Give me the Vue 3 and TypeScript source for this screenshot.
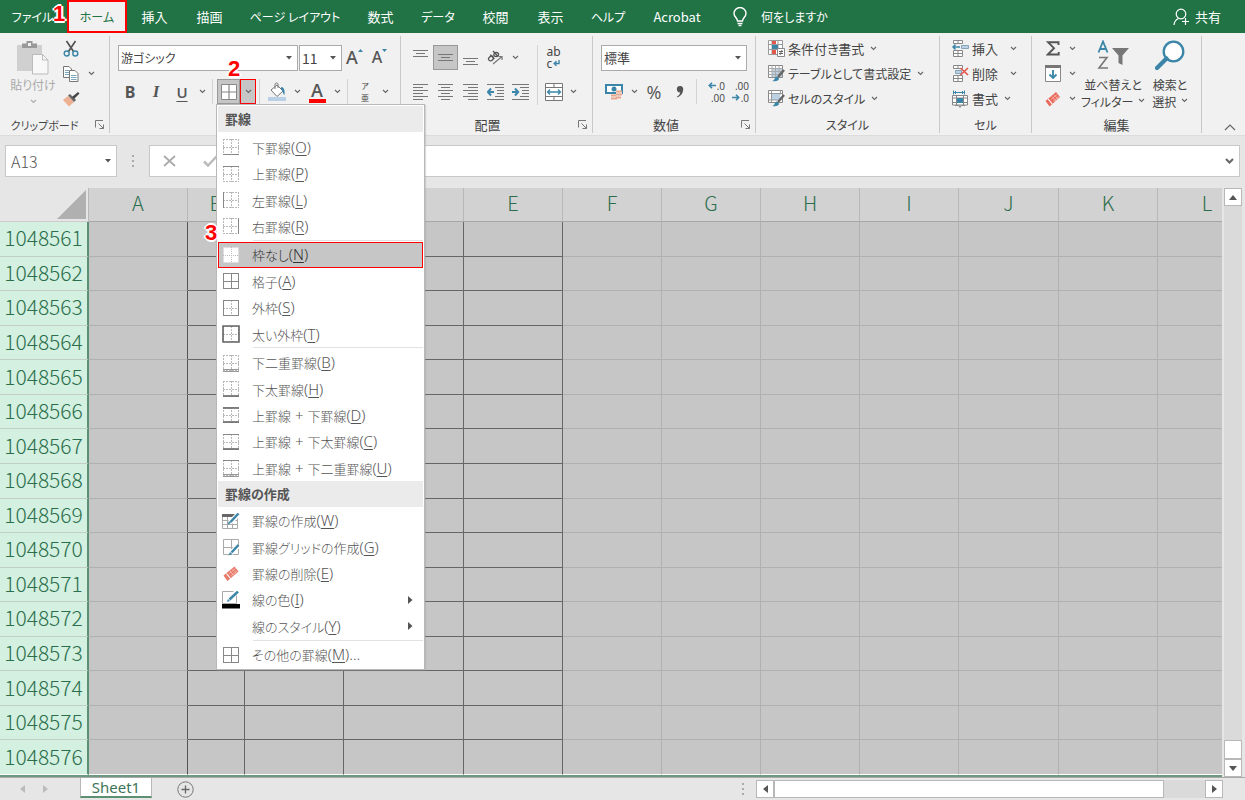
<script setup lang="ts">
import { h, ref } from 'vue'

const Chevron = () =>
  h('svg', { class: 'chev', viewBox: '0 0 7 5', width: 7, height: 5, 'aria-hidden': 'true' }, [
    h('path', { d: 'M1 1l2.5 2.5L6 1', fill: 'none', stroke: 'currentColor', 'stroke-width': 1.1 }),
  ])

const Caret = () =>
  h('svg', { class: 'caret', viewBox: '0 0 6 4', width: 6, height: 4, 'aria-hidden': 'true' }, [
    h('path', { d: 'M0 0h6L3 3.5z', fill: '#555' }),
  ])

const Launcher = () =>
  h('svg', { viewBox: '0 0 10 10', width: 10, height: 10, 'aria-hidden': 'true' }, [
    h('path', { d: 'M.5 7.5V.5H8M3.5 3.5L8.5 8.5M8.500 4.500v4H4.500', fill: 'none', stroke: '#777', 'stroke-width': 1 }),
  ])

const LinesIcon = (props: { rows: number[][] }) =>
  h(
    'svg',
    { viewBox: '0 0 16 18', width: 16, height: 18, 'aria-hidden': 'true' },
    props.rows.map(([x, y, w]) => h('rect', { x, y, width: w, height: 1, fill: '#777' })),
  )
LinesIcon.props = ['rows']

const Arrow = (props: { to: string }) =>
  h('svg', { viewBox: '0 0 8 7', width: 8, height: 7, 'aria-hidden': 'true' }, [
    h('path', {
      d: props.to === 'left' ? 'M8 3.5H1.500M4 .8L1.300 3.500 4 6.200' : 'M0 3.5h6.500M4 .8L6.700 3.500 4 6.200',
      fill: 'none',
      stroke: '#3b86a8',
      'stroke-width': 1.6,
    }),
  ])
Arrow.props = ['to']

interface Tab {
  label: string
  size: string
}
const tabs: Tab[] = [
  { label: '挿入', size: 'kanji' },
  { label: '描画', size: 'kanji' },
  { label: 'ページ レイアウト', size: 'long' },
  { label: '数式', size: 'kanji' },
  { label: 'データ', size: 'kana' },
  { label: '校閲', size: 'kanji' },
  { label: '表示', size: 'kanji' },
  { label: 'ヘルプ', size: 'kana' },
  { label: 'Acrobat', size: 'latin' },
]

interface Entry {
  parts: string[]
  key: string
  tail?: string
  icon: string
  edges?: string[]
  arrow?: boolean
  active?: boolean
}

const groups: { title?: string; entries: Entry[] }[] = [
  {
    title: '罫線',
    entries: [
      { parts: ['下罫線'], key: 'O', icon: 'grid', edges: ['b'] },
      { parts: ['上罫線'], key: 'P', icon: 'grid', edges: ['t'] },
      { parts: ['左罫線'], key: 'L', icon: 'grid', edges: ['l'] },
      { parts: ['右罫線'], key: 'R', icon: 'grid', edges: ['r'] },
    ],
  },
  {
    entries: [
      { parts: ['枠なし'], key: 'N', icon: 'none', active: true },
      { parts: ['格子'], key: 'A', icon: 'grid', edges: ['t', 'b', 'l', 'r', 'h', 'v'] },
      { parts: ['外枠'], key: 'S', icon: 'grid', edges: ['t', 'b', 'l', 'r'] },
      { parts: ['太い外枠'], key: 'T', icon: 'grid', edges: ['box'] },
    ],
  },
  {
    entries: [
      { parts: ['下二重罫線'], key: 'B', icon: 'grid', edges: ['bb'] },
      { parts: ['下太罫線'], key: 'H', icon: 'grid', edges: ['B'] },
      { parts: ['上罫線', '下罫線'], key: 'D', icon: 'grid', edges: ['T', 'B'] },
      { parts: ['上罫線', '下太罫線'], key: 'C', icon: 'grid', edges: ['t', 'B'] },
      { parts: ['上罫線', '下二重罫線'], key: 'U', icon: 'grid', edges: ['t', 'bb'] },
    ],
  },
  {
    title: '罫線の作成',
    entries: [
      { parts: ['罫線の作成'], key: 'W', icon: 'draw' },
      { parts: ['罫線グリッドの作成'], key: 'G', icon: 'drawgrid' },
      { parts: ['罫線の削除'], key: 'E', icon: 'erase' },
      { parts: ['線の色'], key: 'I', icon: 'color', arrow: true },
      { parts: ['線のスタイル'], key: 'Y', icon: '', arrow: true },
    ],
  },
  {
    entries: [{ parts: ['その他の罫線'], key: 'M', tail: '...', icon: 'grid', edges: ['t', 'b', 'l', 'r', 'h', 'v'] }],
  },
]

const edgePaths: Record<string, { d: string; w: number; c: string }> = {
  t: { d: 'M1 1.5h16', w: 1, c: '#888' },
  b: { d: 'M1 16.5h16', w: 1, c: '#888' },
  l: { d: 'M1.5 1v16', w: 1, c: '#888' },
  r: { d: 'M16.5 1v16', w: 1, c: '#888' },
  h: { d: 'M1 9.500h16', w: 1, c: '#888' },
  v: { d: 'M9.500 1v16', w: 1, c: '#888' },
  T: { d: 'M1 2h16', w: 1.6, c: '#666' },
  B: { d: 'M1 16h16', w: 1.6, c: '#666' },
  box: { d: 'M1 1h16v16H1z', w: 1.6, c: '#666' },
  bb: { d: 'M1 15.500h16M1 17.500h16', w: 1, c: '#999' },
}

const columns = ['A', 'B', 'C', 'D', 'E', 'F', 'G', 'H', 'I', 'J', 'K', 'L']
const rows = Array.from({ length: 16 }, (_, i) => 1048561 + i)
const bordered = new Set(['B', 'C', 'D', 'E'])

const font = ref('游ゴシック')
const size = ref('11')
const format = ref('標準')
const cell = ref('A13')
const formula = ref('')
</script>

<template>
  <div class="app">
    <header class="tabs">
      <button class="tab file">ファイル</button>
      <button class="tab home">ホーム<span class="badge one">1</span></button>
      <button v-for="t in tabs" :key="t.label" class="tab" :class="t.size">{{ t.label }}</button>
      <button class="tell">
        <svg viewBox="0 0 14 20" width="14" height="20" aria-hidden="true">
          <path d="M4.5 14c0-3-3.5-4-3.500-7.500a6 6 0 0 1 12 0c0 3.500-3.500 4.500-3.500 7.500z" fill="none" stroke="#fff" stroke-width="1.400" />
          <path d="M4.500 16.500h5M5.500 18.500h3" stroke="#fff" stroke-width="1.400" />
        </svg>
        <span>何をしますか</span>
      </button>
      <button class="share">
        <svg viewBox="0 0 17 18" width="17" height="18" aria-hidden="true">
          <circle cx="8" cy="6" r="4.800" fill="none" stroke="#fff" stroke-width="1.200" />
          <path d="M1 17c.3-3.500 2-5.500 4.500-6.500M12.500 10v7M9 13.500h7" fill="none" stroke="#fff" stroke-width="1.200" />
        </svg>
        <span>共有</span>
      </button>
    </header>

    <section class="ribbon">
      <div class="group clipboard">
        <div class="body triple">
          <button class="paste" disabled>
            <svg viewBox="0 0 32 34" width="32" height="34" aria-hidden="true">
              <path d="M0 4h25v26H0z" fill="#d0d0d0" />
              <path d="M5 7V2.500h4.500V0h6v2.500H20V7z" fill="#999" />
              <rect x="11" y="2" width="3" height="3" fill="#f1f1f1" />
              <path d="M15.500 13.500h10l5.500 5.500v14H15.500z" fill="#f8f8f8" stroke="#bbb" />
              <path d="M25.500 13.500V19H31" fill="none" stroke="#bbb" />
            </svg>
            <span>貼り付け</span>
            <Chevron />
          </button>
          <div class="stack">
            <div class="line"><button class="tool" aria-label="切り取り">
              <svg viewBox="0 0 16 18" width="16" height="18" aria-hidden="true">
                <path d="M3.500 1l7 10.500M12.500 1l-7 10.500" stroke="#555" stroke-width="1.700" />
                <circle cx="3.700" cy="13.500" r="2.500" fill="none" stroke="#3b86a8" stroke-width="1.400" />
                <circle cx="12.300" cy="13.500" r="2.500" fill="none" stroke="#3b86a8" stroke-width="1.400" />
              </svg></button></div>
            <div class="line"><button class="tool" aria-label="コピー">
              <svg viewBox="0 0 16 16" width="16" height="16" aria-hidden="true">
                <path d="M.5.5H6L8.500 3v8.500h-8z" fill="#fff" stroke="#777" />
                <path d="M2 4.500h4M2 6.500h4M2 8.500h4" stroke="#7ba7bd" />
                <path d="M6.500 4.500H12L15 7.500v8H6.500z" fill="#fff" stroke="#777" />
                <path d="M8 9.500h5.500M8 11.500h5.500M8 13.500h5.500" stroke="#7ba7bd" />
              </svg></button><button class="drop" aria-label="コピーのオプション"><Chevron /></button></div>
            <div class="line"><button class="tool" aria-label="書式のコピー">
              <svg viewBox="0 0 17 16" width="17" height="16" aria-hidden="true">
                <path d="M0 9l5-4 6 6-5 4.500z" fill="#edb093" />
                <path d="M5 4.500l2-1.500 6 6-2 2z" fill="#666" />
                <path d="M9 6l6-5 1.500 1.500L11 8z" fill="#444" />
              </svg></button></div>
          </div>
        </div>
        <div class="caption"><span>クリップボード</span><button class="launch" aria-label="クリップボードの詳細"><Launcher /></button></div>
      </div>

      <div class="group fonts">
        <div class="body">
          <div class="line">
            <div class="combo family"><select v-model="font" aria-label="フォント"><option>游ゴシック</option></select><Caret /></div>
            <div class="combo points"><select v-model="size" aria-label="フォント サイズ"><option>11</option></select><Caret /></div>
            <button class="tool grow" aria-label="フォント サイズの拡大">A<svg viewBox="0 0 5 3" width="5" height="3"><path d="M0 3h5L2.500 0z" fill="#3b86a8" /></svg></button>
            <button class="tool grow shrink" aria-label="フォント サイズの縮小">A<svg viewBox="0 0 5 3" width="5" height="3"><path d="M0 0h5L2.500 3z" fill="#3b86a8" /></svg></button>
          </div>
          <div class="line marks">
            <button class="tool bold">B</button>
            <button class="tool italic">I</button>
            <button class="tool under">U</button>
            <button class="drop" aria-label="下線の種類"><Chevron /></button>
            <i class="rule"></i>
            <div class="split">
              <button class="split-main" aria-label="罫線">
                <svg viewBox="0 0 16 16" width="16" height="16" aria-hidden="true">
                  <path d="M.5.5h15v15H.5z" fill="#fff" stroke="#888" /><path d="M0 8h16M8 0v16" stroke="#888" stroke-width="1.200" />
                </svg>
              </button>
              <button class="split-drop" aria-label="罫線メニュー"><Chevron /></button>
              <span class="badge two">2</span>
              <div class="menu" role="menu">
                <template v-for="(g, gi) in groups" :key="gi">
                  <div v-if="g.title" class="menu-title">{{ g.title }}</div>
                  <div v-else class="menu-rule"></div>
                  <button v-for="e in g.entries" :key="e.key" class="entry" :class="{ active: e.active }" role="menuitem">
                    <span v-if="e.active" class="badge three">3</span>
                    <svg class="entry-icon" viewBox="0 0 18 18" width="18" height="18" aria-hidden="true">
                      <template v-if="e.icon === 'grid'">
                        <path d="M1 1.500h16M1 16.500h16M1.500 1v16M16.500 1v16M1 9.500h16M9.500 1v16" fill="none" stroke="#b8b8b8" stroke-dasharray="2 1" />
                        <path v-for="k in e.edges" :key="k" :d="edgePaths[k].d" fill="none" :stroke="edgePaths[k].c" :stroke-width="edgePaths[k].w" />
                      </template>
                      <template v-else-if="e.icon === 'none'">
                        <path d="M1.500 1.500h15v15h-15z" fill="#fff" stroke="#ddd" stroke-dasharray="1 1" />
                        <path d="M1 9.500h16M9.500 1v16" stroke="#bbb" stroke-dasharray="1 1" />
                      </template>
                      <template v-else-if="e.icon === 'draw'">
                        <path d="M.5 3.500h15v13H.5zM.5 8.500h15M.5 12.500h15M5.500 4v12M10.500 4v12" fill="#fff" stroke="#aaa" />
                        <path d="M0 2h16v3H0z" fill="#666" />
                        <path d="M8 10.500l8-8" stroke="#fff" stroke-width="5" />
                        <path d="M8.500 10l8-8.500" stroke="#3b86a8" stroke-width="2.500" />
                        <path d="M5.500 12.500l1.500-3.500 2 2z" fill="#3b86a8" />
                      </template>
                      <template v-else-if="e.icon === 'drawgrid'">
                        <path d="M1.500 1.500h15v15h-15zM1.500 9.500h15M9.500 1.500v15" fill="#fff" stroke="#aaa" />
                        <path d="M9 15l7-7" stroke="#fff" stroke-width="5" />
                        <path d="M9.500 14.500l7-7.500" stroke="#3b86a8" stroke-width="2.500" />
                        <path d="M6.500 17.500l1.500-3.500 2 2z" fill="#3b86a8" />
                      </template>
                      <template v-else-if="e.icon === 'erase'">
                        <path d="M1.500 10.500L12.500 1.500 16.500 6.500 5.500 16z" fill="#e9796b" />
                        <path d="M4.500 8.500l4 5" stroke="#fff" stroke-width="1.200" />
                        <path d="M8 6l4 4.500M10.500 4l4 4.500M7 9l6.500-5.500M9 11l6-5" stroke="#f6c4bd" stroke-width=".7" />
                      </template>
                      <template v-else-if="e.icon === 'color'">
                        <path d="M.5.5h14v12H.5z" fill="#fff" stroke="#aaa" />
                        <path d="M7 8.500l8-8" stroke="#fff" stroke-width="5" />
                        <path d="M7.500 8.500l8.500-8" stroke="#3b86a8" stroke-width="2.500" />
                        <path d="M5 11l1-3 2 2z" fill="#3b86a8" />
                        <path d="M0 13h18v4.500H0z" fill="#000" />
                      </template>
                    </svg>
                    <span class="entry-text"><template v-for="(p, pi) in e.parts" :key="p"><span v-if="pi" class="plus"> + </span>{{ p }}</template><span class="hint">(<u>{{ e.key }}</u>){{ e.tail }}</span></span>
                    <svg v-if="e.arrow" class="entry-arrow" viewBox="0 0 5 8" width="5" height="8" aria-hidden="true"><path d="M0 0l4.500 4L0 8z" fill="#555" /></svg>
                  </button>
                </template>
              </div>
            </div>
            <i class="rule"></i>
            <button class="tool" aria-label="塗りつぶしの色">
              <svg viewBox="0 0 20 19" width="20" height="19" aria-hidden="true">
                <path d="M4 8l6-5 6 6-6 5.500z" fill="#fff" stroke="#777" />
                <path d="M8 7V2.500a1.500 1.500 0 0 1 3 0V6" fill="none" stroke="#777" />
                <path d="M14 5c3 0 4 3 3.500 8-2-1-1-4-3.500-6z" fill="#3b86a8" />
                <path d="M1 15h18v4H1z" fill="#b9d0e6" />
              </svg>
            </button>
            <button class="drop" aria-label="塗りつぶしの色を選択"><Chevron /></button>
            <button class="tool ink" aria-label="フォントの色">A</button>
            <button class="drop" aria-label="フォントの色を選択"><Chevron /></button>
            <i class="rule"></i>
            <button class="tool ruby"><span>ア</span><span>亜</span></button>
            <button class="drop" aria-label="ふりがなのオプション"><Chevron /></button>
          </div>
        </div>
        <div class="caption"></div>
      </div>

      <div class="group align">
        <div class="body cols">
          <div class="pair">
            <div class="line">
              <button class="tool" aria-label="上揃え"><LinesIcon :rows="[[0, 1, 15], [3, 4, 9], [0, 7, 15]]" /></button>
              <button class="tool pressed" aria-label="上下中央揃え"><LinesIcon :rows="[[0, 5, 15], [3, 8, 9], [0, 11, 15]]" /></button>
              <button class="tool" aria-label="下揃え"><LinesIcon :rows="[[0, 9, 15], [3, 12, 9], [0, 15, 15]]" /></button>
              <button class="tool" aria-label="方向">
                <svg viewBox="0 0 17 16" width="17" height="16" aria-hidden="true">
                  <ellipse cx="4" cy="8.500" rx="2.600" ry="2.100" fill="none" stroke="#555" stroke-width="1.300" transform="rotate(-40 4 8.500)" />
                  <path d="M3.300 4.600L7.300 9M6 1l5 5.500" stroke="#555" stroke-width="1.300" />
                  <ellipse cx="9.200" cy="4.600" rx="2.400" ry="2.100" fill="none" stroke="#555" stroke-width="1.300" />
                  <path d="M6 14l9-7.500M11.500 6.500H15V10" fill="none" stroke="#777" stroke-width="1.200" />
                </svg>
              </button>
              <button class="drop" aria-label="方向の種類"><Chevron /></button>
            </div>
            <div class="line">
              <button class="tool" aria-label="左揃え"><LinesIcon :rows="[[0, 1, 15], [0, 4, 10], [0, 7, 15], [0, 10, 10], [0, 13, 15], [0, 16, 10]]" /></button>
              <button class="tool" aria-label="中央揃え"><LinesIcon :rows="[[0, 1, 15], [3, 4, 9], [0, 7, 15], [3, 10, 9], [0, 13, 15], [3, 16, 9]]" /></button>
              <button class="tool" aria-label="右揃え"><LinesIcon :rows="[[0, 1, 15], [5, 4, 10], [0, 7, 15], [5, 10, 10], [0, 13, 15], [5, 16, 10]]" /></button>
              <button v-for="d in ['out', 'in']" :key="d" class="tool" :aria-label="d === 'out' ? 'インデントを減らす' : 'インデントを増やす'">
                <svg viewBox="0 0 17 18" width="17" height="18" aria-hidden="true">
                  <path d="M0 1.500h17M8 4.500h9M10 7.500h7M10 10.500h7M8 13.500h9M0 16.500h17" stroke="#777" />
                  <path :d="d === 'out' ? 'M7 9H1M4 5.500L.8 9 4 12.500' : 'M0 9h6M3 5.500L6.200 9 3 12.500'" fill="none" stroke="#3b86a8" stroke-width="2" />
                </svg>
              </button>
            </div>
          </div>
          <i class="rule tall"></i>
          <div class="pair">
            <div class="line"><button class="tool" aria-label="折り返して全体を表示する">
              <span class="wrap"><span>ab</span><span class="wrap-low">c<svg viewBox="0 0 7 7" width="7" height="7" aria-hidden="true"><path d="M6 0v3.500H1.500M3.500 1.200L1.200 3.500l2.300 2.300" fill="none" stroke="#3b86a8" stroke-width="1.400" /></svg></span></span>
            </button></div>
            <div class="line"><button class="tool" aria-label="セルを結合して中央揃え">
              <svg viewBox="0 0 18 18" width="18" height="18" aria-hidden="true">
                <path d="M.5.5h17v17H.5zM.5 4.500h17M.5 13.500h17M9 .5v4M9 13.500v4" fill="#fff" stroke="#777" />
                <path d="M3 9h12M5 6.500L2.500 9 5 11.500M13 6.500L15.500 9 13 11.500" fill="none" stroke="#3b86a8" stroke-width="1.300" />
              </svg></button><button class="drop" aria-label="結合のオプション"><Chevron /></button></div>
          </div>
        </div>
        <div class="caption"><span>配置</span><button class="launch" aria-label="配置の詳細"><Launcher /></button></div>
      </div>

      <div class="group number">
        <div class="body">
          <div class="line"><div class="combo format"><select v-model="format" aria-label="表示形式"><option>標準</option></select><Caret /></div></div>
          <div class="line">
            <button class="tool" aria-label="通貨表示形式">
              <svg viewBox="0 0 18 18" width="18" height="18" aria-hidden="true">
                <path d="M1 2h16v8H1z" fill="#fff" stroke="#3b86a8" stroke-width="2" />
                <circle cx="9" cy="6" r="2.500" fill="#3b86a8" />
                <path d="M11 8h6v8h-6z" fill="#f1f1f1" />
                <path d="M11 8.500h6M11 11.500h6M11 14.500h5M6 12.500h5M6 15.500h6" stroke="#e9a58c" stroke-width="2" />
              </svg>
            </button>
            <button class="drop" aria-label="通貨の種類"><Chevron /></button>
            <button class="tool percent">%</button>
            <button class="tool" aria-label="桁区切りスタイル">
              <svg viewBox="0 0 8 12" width="8" height="12" aria-hidden="true"><path d="M4 0a3 3 0 0 1 3.200 3.500C7.200 7 5 10 1.500 11.500L1 10.500C3 9.500 4 8 4.200 6.500A3 3 0 1 1 4 0z" fill="#555" /></svg>
            </button>
            <i class="rule"></i>
            <button class="tool digits"><span><Arrow to="left" />.0</span><span>.00</span></button>
            <button class="tool digits"><span>.00</span><span><Arrow to="right" />.0</span></button>
          </div>
        </div>
        <div class="caption"><span>数値</span><button class="launch" aria-label="数値の詳細"><Launcher /></button></div>
      </div>

      <div class="group styles">
        <div class="body triple list">
          <button class="wide">
            <svg viewBox="0 0 17 17" width="17" height="17" aria-hidden="true">
              <path d="M.5.5h14v14H.5zM.5 4.500h14M.5 9.500h14M4 .5v14M10 .5v14" fill="#fff" stroke="#999" />
              <path d="M4 1h4v3H4zM4 10h4v4H4z" fill="#e4574c" /><path d="M4 5h6v4H4z" fill="#3b86a8" />
              <path d="M9.500 8.500h7v8h-7z" fill="#fff" stroke="#888" /><path d="M11 11.500h4M11 13.500h4M14 10l-2 5" stroke="#666" />
            </svg>
            <span>条件付き書式</span><Chevron />
          </button>
          <button class="wide kana-text">
            <svg viewBox="0 0 17 17" width="17" height="17" aria-hidden="true">
              <path d="M.5.5h14v12H.5z" fill="#fff" stroke="#888" /><path d="M4 4h10v8H4z" fill="#bcd2e4" />
              <path d="M.5 3.500h14M.5 6.500h14M.5 9.500h14M4 .5v12M7.500 .5v12M11 .5v12" stroke="#aaa" />
              <path d="M10 12l6-7" stroke="#666" stroke-width="2.500" /><path d="M4 16c3 0 2-4 5-4.500l2 2c0 2.500-3 3-7 2.500z" fill="#3b86a8" />
            </svg>
            <span>テーブルとして書式設定</span><Chevron />
          </button>
          <button class="wide kana-text">
            <svg viewBox="0 0 17 17" width="17" height="17" aria-hidden="true">
              <path d="M.5.5h14v12H.5z" fill="#fff" stroke="#888" /><path d="M4 4h8v6H4z" fill="#bcd2e4" />
              <path d="M.5 3.500h14M3.500 .5v12M12.500 .5v4M.5 10h9" stroke="#999" />
              <path d="M10 12l6-7" stroke="#666" stroke-width="2.500" /><path d="M4 16c3 0 2-4 5-4.500l2 2c0 2.500-3 3-7 2.500z" fill="#3b86a8" />
            </svg>
            <span>セルのスタイル</span><Chevron />
          </button>
        </div>
        <div class="caption kana-text"><span>スタイル</span></div>
      </div>

      <div class="group cells">
        <div class="body triple list">
          <button class="wide spaced">
            <svg viewBox="0 0 17 17" width="17" height="17" aria-hidden="true">
              <path d="M1.500.5h9v3h-9zM6 .5v3M1.500 10.500h9v6h-9zM1.500 13.500h9M6 10.500v6" fill="#fff" stroke="#888" />
              <path d="M9.500 5.500h7v3h-7z" fill="#bcd2e4" stroke="#88a5b8" /><path d="M8 7H1M3.500 4.500L1 7l2.500 2.500" fill="none" stroke="#3b86a8" stroke-width="1.500" />
            </svg>
            <span>挿入</span><Chevron />
          </button>
          <button class="wide spaced">
            <svg viewBox="0 0 17 17" width="17" height="17" aria-hidden="true">
              <path d="M1.500.5h9v3h-9zM6 .5v3M1.500 10.500h9v6h-9zM1.500 13.500h9M6 10.500v6" fill="#fff" stroke="#888" />
              <path d="M3.500 5.500h6v3h-6z" fill="#bcd2e4" stroke="#88a5b8" /><path d="M8.500 3l7.500 7M16 3l-7.500 7" stroke="#e4574c" stroke-width="1.700" />
            </svg>
            <span>削除</span><Chevron />
          </button>
          <button class="wide">
            <svg viewBox="0 0 17 18" width="17" height="18" aria-hidden="true">
              <path d="M1.500.5v4M12.500.5v4M2 2.500h10M4 1L2.500 2.500 4 4M10 1l1.500 1.500L10 4" fill="none" stroke="#3b86a8" />
              <path d="M.5 5.500h15v9.500H.5zM.5 8h15M.5 12.500h15M4.500 5.500v10M11.500 5.500v10" fill="#fff" stroke="#888" />
              <path d="M5 8h6v5H5z" fill="#3b86a8" /><path d="M3 15.500h4l1 2 1-2h4" fill="none" stroke="#888" />
            </svg>
            <span>書式</span><Chevron />
          </button>
        </div>
        <div class="caption kana-text"><span>セル</span></div>
      </div>

      <div class="group edit">
        <div class="body triple">
          <div class="stack">
            <div class="line"><button class="tool" aria-label="合計">
              <svg viewBox="0 0 14 15" width="14" height="15" aria-hidden="true"><path d="M12.500 4V1.200H2L8 7.200 1.800 13.500h10.900V11" fill="none" stroke="#555" stroke-width="1.900" /></svg>
            </button><button class="drop" aria-label="合計の種類"><Chevron /></button></div>
            <div class="line"><button class="tool" aria-label="フィル">
              <svg viewBox="0 0 16 17" width="16" height="17" aria-hidden="true"><path d="M.5.5h15v16H.5z" fill="#fff" stroke="#888" /><path d="M0 0h16v3H0z" fill="#777" /><path d="M8 5v8M4.500 9.500L8 13l3.500-3.500" fill="none" stroke="#3b86a8" stroke-width="1.900" /></svg>
            </button><button class="drop" aria-label="フィルの種類"><Chevron /></button></div>
            <div class="line"><button class="tool" aria-label="クリア">
              <svg viewBox="0 0 16 16" width="16" height="16" aria-hidden="true"><path d="M.5 10L11 1l4 5L4.500 15.500z" fill="#e9695c" /><path d="M3.200 8l4 5" stroke="#fff" stroke-width="1.200" /><path d="M7 5.500l4 4.500M9 3.500l4 4.500M6 8.500L12.500 3M8 10.500l6-5" stroke="#f6c4bd" stroke-width=".7" /></svg>
            </button><button class="drop" aria-label="クリアの種類"><Chevron /></button></div>
          </div>
          <button class="big sort">
            <svg viewBox="0 0 32 30" width="32" height="30" aria-hidden="true">
              <path d="M1.500 12.500L6 1.500l4.500 11M3 9h6" fill="none" stroke="#3b86a8" stroke-width="1.800" />
              <path d="M2 17.500h8L2 28h9" fill="none" stroke="#777" stroke-width="1.600" />
              <path d="M15 8h17l-6.500 7.500V25l-4-2v-7.500z" fill="#777" />
            </svg>
            <span>並べ替えと</span><span>フィルター <Chevron /></span>
          </button>
          <button class="big find">
            <svg viewBox="0 0 30 30" width="30" height="30" aria-hidden="true">
              <circle cx="18.500" cy="11.500" r="9.800" fill="#fff" stroke="#3b86a8" stroke-width="2.300" />
              <path d="M2 28L11.500 18.500" stroke="#3b86a8" stroke-width="4.200" stroke-linecap="round" />
            </svg>
            <span>検索と</span><span>選択 <Chevron /></span>
          </button>
        </div>
        <div class="caption"><span>編集</span></div>
      </div>
      <button class="collapse" aria-label="リボンを折りたたむ">
        <svg viewBox="0 0 12 7" width="12" height="7" aria-hidden="true"><path d="M1 6l5-5 5 5" fill="none" stroke="#666" stroke-width="1.200" /></svg>
      </button>
    </section>

    <section class="formula">
      <div class="name"><input v-model="cell" aria-label="名前ボックス" /><Caret /></div>
      <i class="dots"></i>
      <div class="entrybar">
        <button aria-label="キャンセル"><svg viewBox="0 0 13 12" width="13" height="12" aria-hidden="true"><path d="M1 1l11 10M12 1L1 11" stroke="#aaa" stroke-width="1.700" /></svg></button>
        <button aria-label="入力"><svg viewBox="0 0 15 12" width="15" height="12" aria-hidden="true"><path d="M1 6.500l4 4L14 1" fill="none" stroke="#bbb" stroke-width="2.500" /></svg></button>
        <input v-model="formula" aria-label="数式バー" />
        <button class="expand" aria-label="数式バーの展開"><svg viewBox="0 0 9 6" width="9" height="6" aria-hidden="true"><path d="M1 1l3.500 3.500L8 1" fill="none" stroke="#666" stroke-width="2" /></svg></button>
      </div>
    </section>

    <main class="sheet">
      <div class="view">
        <table>
          <colgroup>
            <col class="c-head" />
            <col v-for="c in columns" :key="c" :class="'c-' + c" />
          </colgroup>
          <thead>
            <tr>
              <th class="corner"><svg viewBox="0 0 30 30" width="29" height="29" aria-hidden="true"><path d="M30 0v30H0z" fill="#b0b0b0" /></svg></th>
              <th v-for="c in columns" :key="c" scope="col">{{ c }}</th>
            </tr>
          </thead>
          <tbody>
            <tr v-for="r in rows" :key="r">
              <th scope="row">{{ r }}</th>
              <td v-for="c in columns" :key="c" :class="{ dark: bordered.has(c), edge: c === 'A' }"></td>
            </tr>
          </tbody>
        </table>
      </div>
      <div class="vscroll">
        <button class="cap" aria-label="上へ"><svg viewBox="0 0 8 5" width="8" height="5"><path d="M0 5h8L4 0z" fill="#555" /></svg></button>
        <div class="track"><div class="thumb"></div></div>
        <button class="cap" aria-label="下へ"><svg viewBox="0 0 8 5" width="8" height="5"><path d="M0 0h8L4 5z" fill="#555" /></svg></button>
      </div>
    </main>

    <footer class="foot">
      <button class="nav" aria-label="前のシート"><svg viewBox="0 0 5 8" width="5" height="8"><path d="M5 0v8L0 4z" fill="#bbb" /></svg></button>
      <button class="nav" aria-label="次のシート"><svg viewBox="0 0 5 8" width="5" height="8"><path d="M0 0v8l5-4z" fill="#bbb" /></svg></button>
      <button class="sheet-tab">Sheet1</button>
      <button class="add" aria-label="新しいシート"><svg viewBox="0 0 17 17" width="17" height="17"><circle cx="8.500" cy="8.500" r="7.700" fill="none" stroke="#777" /><path d="M8.500 4.500v8M4.500 8.500h8" stroke="#666" stroke-width="1.300" /></svg></button>
      <i class="dots small"></i>
      <div class="hscroll">
        <button class="cap" aria-label="左へ"><svg viewBox="0 0 5 8" width="5" height="8"><path d="M5 0v8L0 4z" fill="#555" /></svg></button>
        <div class="thumb"></div>
        <div class="track"></div>
        <button class="cap" aria-label="右へ"><svg viewBox="0 0 5 8" width="5" height="8"><path d="M0 0v8l5-4z" fill="#555" /></svg></button>
      </div>
    </footer>
  </div>
</template>

<style>
html, body { margin: 0; background: #e6e6e6; }
</style>

<style scoped>
.app {
  min-height: 100vh;
  display: flex;
  flex-direction: column;
  overflow: hidden;
  background: #e6e6e6;
  color: #444;
  font: 13px/18px "Noto Sans CJK JP", "Noto Sans", sans-serif;
  font-feature-settings: "palt";
}
button, input, select {
  box-sizing: border-box;
  margin: 0;
  padding: 0;
  border: 0;
  background: none;
  color: inherit;
  font: inherit;
  font-feature-settings: inherit;
  white-space: nowrap;
}
svg { flex: none; display: block; }
.tabs { display: flex; height: 33px; background: #217346; color: #fff; }
.tab { flex: none; display: flex; justify-content: center; align-items: center; width: 55px; }
.file { width: 67px; padding-right: 2px; font-size: 12px; }
.home { position: relative; width: 60px; background: #f1f1f1; color: #217346; border: 2px solid #f00; font-size: 12px; }
.long { width: 116px; font-size: 12px; }
.kana { width: 60px; font-size: 12px; }
.latin { width: 78px; }
.tell { display: flex; align-items: center; gap: 14px; margin-left: 17px; font-size: 12px; }
.share { display: flex; align-items: center; gap: 5px; margin-left: auto; margin-right: 24px; }
.badge {
  position: absolute;
  color: #f00;
  font: bold 22px/22px "Liberation Sans", Arial, sans-serif;
  text-shadow: 1px 0 #fff, -1px 0 #fff, 0 1px #fff, 0 -1px #fff, 2px 0 #fff, -2px 0 #fff, 0 2px #fff, 0 -2px #fff;
}
.one { left: -16px; top: 1px; }
.two { left: 11px; top: -21px; }
.three { left: -13px; top: -20px; }

.ribbon { display: flex; height: 102px; background: #f1f1f1; border-bottom: 1px solid #dcdcdc; }
.group { flex: none; box-sizing: border-box; position: relative; display: flex; flex-direction: column; border-right: 1px solid #c8c8c8; margin: 3px 0 2px; }
.body { flex: 1; display: flex; flex-direction: column; gap: 9px; padding: 9px 0 0 8px; }
.triple { gap: 0; padding-top: 0; flex-direction: row; }
.cols { flex-direction: row; gap: 0; }
.list { flex-direction: column; }
.pair { display: flex; flex-direction: column; gap: 9px; }
.line { display: flex; align-items: center; height: 25px; }
.caption { display: flex; justify-content: center; align-items: center; height: 16px; line-height: 16px; color: #444; }
.kana-text { font-size: 12px; }
.launch { position: absolute; right: 4px; bottom: 3px; }
.clipboard { width: 110px; }
.fonts { width: 291px; }
.align { width: 192px; }
.number { width: 163px; }
.styles { width: 184px; }
.cells { width: 92px; }
.edit { width: 170px; }
.tool { display: flex; align-items: center; justify-content: center; width: 26px; height: 25px; }
.drop { display: flex; align-items: center; justify-content: center; width: 14px; height: 25px; color: #666; }
.rule { flex: none; width: 1px; height: 25px; margin: 0 4px 0 3px; background: #d4d4d4; }
.rule.tall { height: 60px; margin: 0 3px; }
.paste { display: flex; flex-direction: column; align-items: center; width: 50px; padding-top: 5px; color: #aaa; line-height: 20px; height: 72px; font-size: 12px; }
.paste .chev { flex: none; margin-top: 4px; color: #aaa; }
.clipboard .caption { padding-right: 20px; font-size: 11px; }
.combo, .name { display: grid; box-sizing: border-box; align-items: center; height: 26px; background: #fff; border: 1px solid #ababab; }
.combo > *, .name > * { grid-area: 1 / 1; }
.combo .caret, .name .caret { justify-self: end; margin-right: 5px; pointer-events: none; }
select { appearance: none; width: 100%; height: 24px; padding-left: 2px; }
.family { width: 180px; margin-right: 1px; font-size: 12px; }
.points { width: 43px; }
.points select { font-size: 14px; }
.format { width: 146px; }
.grow { align-items: flex-start; width: 25px; font: 500 18px/25px "Noto Sans", sans-serif; color: #555; }
.grow svg { margin-top: 4px; }
.shrink { font-size: 16px; }
.bold { font: bold 16px "Noto Sans", sans-serif; color: #555; }
.italic { font: italic bold 17px "Liberation Serif", serif; color: #555; }
.under { font: 600 15px "Open Sans", sans-serif; text-decoration: underline; text-underline-offset: 3px; color: #555; }
.marks { margin-left: -1px; }
.split { position: relative; display: flex; width: 39px; height: 25px; background: #c6c6c6; }
.split-main { display: flex; align-items: center; justify-content: center; width: 23px; border: 1px solid #999; }
.split-drop { display: flex; align-items: center; justify-content: center; width: 16px; border: 1px solid #f00; }
.ink { font: 600 18px/18px "Open Sans", sans-serif; height: 22px; background: linear-gradient(#f00, #f00) center bottom / 17px 4px no-repeat; align-items: flex-start; color: #555; }
.ruby { flex-direction: column; line-height: 12px; font-size: 8px; }
.align .tool { width: 25px; }
.align .body { padding-left: 7px; }
.align .pair:first-child { width: 126px; }
.tool.pressed { background: #c6c6c6; outline: 1px solid #999; outline-offset: -1px; }
.align .caption { padding-right: 18px; }
.wrap { display: grid; font: 12px/12px "Noto Sans", sans-serif; text-align: left; }
.wrap-low { display: flex; align-items: center; gap: 1px; }
.percent { font: 18px "Open Sans", sans-serif; color: #555; }
.digits { width: 24px; flex-direction: column; align-items: flex-end; font: 10px/12px "Open Sans", sans-serif; }
.digits span { display: flex; align-items: center; gap: 1px; }
.number .caption { padding-right: 16px; }
.wide { display: flex; align-items: center; gap: 3px; height: 25px; }
.wide .chev { margin-left: 3px; }
.list { padding-left: 12px; }
.spaced .chev { margin-left: 9px; }
.edit .stack { width: 43px; }
.edit .stack .tool { width: 25px; }
.big { display: flex; flex-direction: column; align-items: center; width: 60px; padding-top: 4px; line-height: 17px; height: 76px; font-size: 12px; }
.big svg:first-child { margin-bottom: 6px; }
.big .chev { display: inline-block; vertical-align: middle; margin-left: 2px; }
.find { width: 54px; }
.chev { color: #666; }
.collapse { align-self: flex-end; margin: 0 9px 4px auto; }

.menu {
  position: absolute;
  z-index: 5;
  left: -1px;
  top: 100%;
  box-sizing: border-box;
  display: flex;
  flex-direction: column;
  width: 209px;
  min-height: 566px;
  padding: 1px;
  background: #fff;
  border: 1px solid #b8b8b8;
  box-shadow: 1px 1px 1px #9995;
  color: #555;
}
.menu-title { flex: none; height: 26px; line-height: 26px; padding-left: 7px; background: #ebebeb; font-weight: bold; }
.menu-title:first-child { margin-bottom: 2px; }
.menu-rule { flex: none; height: 1px; margin: 0 0 1px 35px; background: #e2e2e2; }
.entry { position: relative; flex: 1 1 26px; display: flex; align-items: center; padding-left: 4px; text-align: left; font-weight: 300; }
.entry-text { flex: 1; padding-left: 12px; }
.plus, .hint { font-family: "Noto Sans", sans-serif; font-size: 15px; }
.plus { white-space: pre; }
.entry-arrow { margin-right: 10px; }
.entry.active { background: #c6c6c6; color: #333; outline: 1px solid #f00; outline-offset: -1px; }
.entry u { text-underline-offset: 2px; }

.formula { display: flex; align-items: center; gap: 15px; height: 52px; box-sizing: border-box; padding: 0 5px 2px; }
.name { width: 112px; height: 32px; border-color: #c8c8c8; }
.name input { width: 90px; padding-left: 5px; font-size: 16px; color: #555; font-weight: 300; }
.dots { width: 2px; height: 12px; background: repeating-linear-gradient(#aaa 0 2px, transparent 2px 5px); }
.entrybar { flex: 1; display: flex; align-items: center; height: 32px; box-sizing: border-box; background: #fff; border: 1px solid #c8c8c8; }
.entrybar button { padding-left: 13px; margin-right: 14px; }
.entrybar input { flex: 1; min-width: 0; }
.entrybar .expand { margin-right: 5px; }

.sheet { flex: 1; display: flex; min-height: 0; border-bottom: 1px solid #aaa; }
.view { flex: 1; min-width: 0; overflow: hidden; display: flex; border-bottom: 2px solid #6f9880; }
table { flex: none; width: 1256px; table-layout: fixed; border-collapse: separate; border-spacing: 0; }
.c-head { width: 89px; }
.c-A { width: 99px; }
.c-B { width: 57px; }
.c-C { width: 99px; }
.c-D { width: 120px; }
.c-E, .c-F, .c-G, .c-H, .c-I, .c-K, .c-L { width: 99px; }
.c-J { width: 100px; }
th, td { padding: 0; font-weight: 300; }
thead th { height: 34px; box-sizing: border-box; padding-bottom: 3px; background: #d2d2d2; border-right: 1px solid #b8b8b8; border-bottom: 1px solid #a6a6a6; color: #2b6e4c; font-size: 20px; line-height: 28px; }
thead .corner { background: #e6e6e6; border-bottom-color: #ccc; vertical-align: bottom; padding-bottom: 0; }
.corner svg { margin: 0 2px 2px auto; }
tbody th { height: 34px; box-sizing: border-box; padding-bottom: 3px; background: #d3f0e0; border-right: 2px solid #5d8f73; border-bottom: 1px solid #c2cfc8; color: #2b6e4c; font-size: 21px; line-height: 28px; text-align: center; }
td { box-sizing: border-box; background: #c6c6c6; border-right: 1px solid #b0b0b0; border-bottom: 1px solid #b0b0b0; }
td.edge { border-right-color: #555; }
td.dark { border-right-color: #666; border-bottom-color: #666; }
tbody tr:last-child > * { border-bottom-color: #fff; }
.vscroll { flex: none; display: flex; flex-direction: column; width: 18px; margin: 0 3px 0 2px; background: #dadada; }
.cap { flex: none; display: flex; align-items: center; justify-content: center; width: 18px; height: 18px; background: #fff; border: 1px solid #b8b8b8; }
.vscroll .track { flex: 1; display: flex; align-items: flex-end; }
.vscroll .thumb { width: 18px; height: 19px; box-sizing: border-box; background: #fff; border: 1px solid #b8b8b8; }
.foot { flex: none; display: flex; align-items: center; height: 22px; }
.nav { width: 23px; display: flex; justify-content: center; }
.nav:first-child { margin-left: 11px; }
.sheet-tab { width: 72px; height: 20px; align-self: flex-start; margin-left: 23px; background: #fff; border: 1px solid #b8b8b8; border-top: 0; border-bottom: 2px solid #5d8f73; color: #3d7559; font: 15px/16px "Noto Sans", sans-serif; }
.add { margin-left: 25px; }
.small { margin-left: auto; margin-right: 12px; }
.hscroll { display: flex; width: 37.5%; margin-right: 22px; height: 18px; background: #dadada; }
.hscroll .thumb { flex: 19; box-sizing: border-box; background: #fff; border: 1px solid #b8b8b8; }
.hscroll .track { flex: 2; }
</style>
